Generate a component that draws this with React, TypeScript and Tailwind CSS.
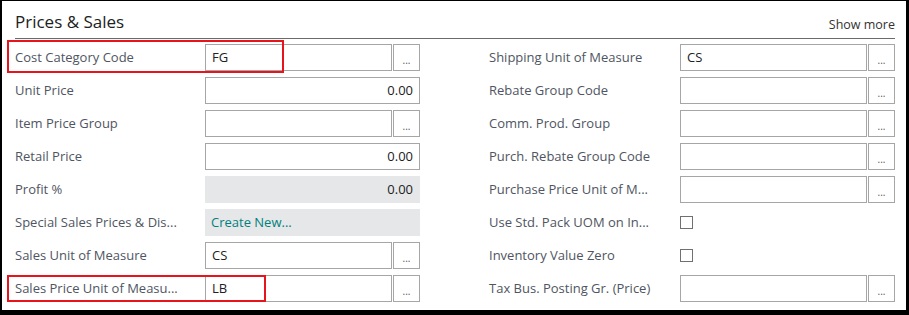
import React from "react";

type Field =
  | { label: string; kind: "lookup"; value?: string }
  | { label: string; kind: "number"; value: string }
  | { label: string; kind: "readonly"; value: string }
  | { label: string; kind: "link"; value: string }
  | { label: string; kind: "check" };

const left: Field[] = [
  { label: "Cost Category Code", kind: "lookup", value: "FG" },
  { label: "Unit Price", kind: "number", value: "0.00" },
  { label: "Item Price Group", kind: "lookup" },
  { label: "Retail Price", kind: "number", value: "0.00" },
  { label: "Profit %", kind: "readonly", value: "0.00" },
  { label: "Special Sales Prices & Dis...", kind: "link", value: "Create New..." },
  { label: "Sales Unit of Measure", kind: "lookup", value: "CS" },
  { label: "Sales Price Unit of Measu...", kind: "lookup", value: "LB" },
];

const right: Field[] = [
  { label: "Shipping Unit of Measure", kind: "lookup", value: "CS" },
  { label: "Rebate Group Code", kind: "lookup" },
  { label: "Comm. Prod. Group", kind: "lookup" },
  { label: "Purch. Rebate Group Code", kind: "lookup" },
  { label: "Purchase Price Unit of M...", kind: "lookup" },
  { label: "Use Std. Pack UOM on In...", kind: "check" },
  { label: "Inventory Value Zero", kind: "check" },
  { label: "Tax Bus. Posting Gr. (Price)", kind: "lookup" },
];

function Control({ field }: { field: Field }) {
  if (field.kind === "lookup") {
    return (
      <div className="flex gap-px">
        <div className="flex-1 h-[27px] border border-[#a6a6a6] bg-white px-[6px] flex items-center text-[13px] text-[#212121]">
          {field.value}
        </div>
        <div className="w-[27px] h-[27px] border border-[#a6a6a6] bg-white flex items-end justify-center pb-[5px] text-[10px] leading-none text-[#555]">
          ...
        </div>
      </div>
    );
  }
  if (field.kind === "number") {
    return (
      <div className="h-[27px] border border-[#a6a6a6] bg-white px-[6px] flex items-center justify-end text-[13px] text-[#212121]">
        {field.value}
      </div>
    );
  }
  if (field.kind === "readonly") {
    return (
      <div className="h-[27px] bg-[#e6e7e8] px-[7px] flex items-center justify-end text-[13px] text-[#212121]">
        {field.value}
      </div>
    );
  }
  if (field.kind === "link") {
    return (
      <div className="h-[27px] bg-[#e6e7e8] px-[6px] flex items-center text-[13px] text-[#00817f]">
        {field.value}
      </div>
    );
  }
  return (
    <div className="h-[27px] flex items-center">
      <div className="w-[13px] h-[13px] border border-[#707070] bg-white" />
    </div>
  );
}

function Column({ fields, labelWidth }: { fields: Field[]; labelWidth: string }) {
  return (
    <div className="flex flex-col gap-[6px]">
      {fields.map((f) => (
        <div key={f.label} className="flex items-center">
          <div className={`${labelWidth} text-[13px] text-[#4f5562] whitespace-nowrap`}>{f.label}</div>
          <div className="flex-1">
            <Control field={f} />
          </div>
        </div>
      ))}
    </div>
  );
}

export default function App() {
  return (
    <div
      className="relative w-[909px] h-[315px] bg-white border-t border-l-2 border-r-[3px] border-b-[5px] border-black pl-[13px] pr-[11px]"
      style={{ fontFamily: '"Open Sans", "Noto Sans", sans-serif' }}
    >
      <div className="h-[38px] flex items-end justify-between border-b border-[#6b6b6b] pb-[4px]">
        <div className="text-[17px] leading-[24px] text-[#212121]">Prices &amp; Sales</div>
        <div className="text-[12.5px] leading-[16px] text-[#333] mb-[1px]">Show more</div>
      </div>
      <div className="grid grid-cols-[405px_406px] gap-x-[69px] pt-[5px]">
        <Column fields={left} labelWidth="w-[190px]" />
        <Column fields={right} labelWidth="w-[191px]" />
      </div>
      <div className="absolute left-[5px] top-[39px] w-[277px] h-[33px] border-2 border-[#e8141c]" />
      <div className="absolute left-[5px] top-[274px] w-[259px] h-[27px] border-2 border-[#e8141c]" />
    </div>
  );
}
